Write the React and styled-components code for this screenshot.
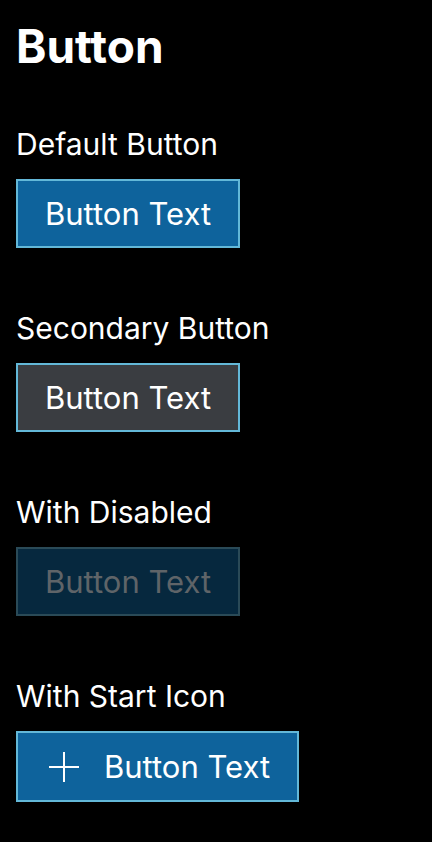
import React from 'react';
import styled, { createGlobalStyle } from 'styled-components';

const GlobalStyle = createGlobalStyle`
  html, body {
    margin: 0;
    padding: 0;
    background: #000000;
    font-family: 'Inter', 'Liberation Sans', sans-serif;
  }
`;

const Page = styled.div`
  padding: 18px 16px 0 16px;
  color: #ffffff;
`;

const Title = styled.h1`
  margin: 0 0 52px 0;
  font-size: 46px;
  line-height: 56px;
  font-weight: 700;
`;

const Section = styled.section`
  display: flex;
  flex-direction: column;
  align-items: flex-start;
  gap: 17px;
  margin-bottom: 62px;
`;

const Label = styled.div`
  font-size: 30px;
  line-height: 36px;
  font-weight: 400;
`;

const variants = {
  primary: { bg: '#0e639c', border: '#63b8d8', color: '#ffffff' },
  secondary: { bg: '#3a3d41', border: '#63b8d8', color: '#ffffff' },
  disabled: { bg: '#06283e', border: '#2a4a57', color: '#5f6468' },
};

const Button = styled.button`
  display: inline-flex;
  align-items: center;
  gap: 24px;
  box-sizing: border-box;
  height: ${(p) => (p.$icon ? '71px' : '69px')};
  padding: 0 27px 0 ${(p) => (p.$icon ? '30px' : '27px')};
  background: ${(p) => variants[p.$variant].bg};
  border: 2px solid ${(p) => variants[p.$variant].border};
  border-radius: 0;
  color: ${(p) => variants[p.$variant].color};
  font-family: inherit;
  font-size: 31px;
  font-weight: 400;
  cursor: ${(p) => (p.$variant === 'disabled' ? 'default' : 'pointer')};
`;

const PlusIcon = () => (
  <svg width="32" height="32" viewBox="0 0 32 32" fill="none">
    <path d="M16 1V31M1 16H31" stroke="#ffffff" strokeWidth="2" />
  </svg>
);

export default function App() {
  return (
    <>
      <GlobalStyle />
      <Page>
        <Title>Button</Title>
        <Section>
          <Label>Default Button</Label>
          <Button $variant="primary">Button Text</Button>
        </Section>
        <Section>
          <Label>Secondary Button</Label>
          <Button $variant="secondary">Button Text</Button>
        </Section>
        <Section>
          <Label>With Disabled</Label>
          <Button $variant="disabled" disabled>Button Text</Button>
        </Section>
        <Section>
          <Label>With Start Icon</Label>
          <Button $variant="primary" $icon>
            <PlusIcon />
            Button Text
          </Button>
        </Section>
      </Page>
    </>
  );
}
